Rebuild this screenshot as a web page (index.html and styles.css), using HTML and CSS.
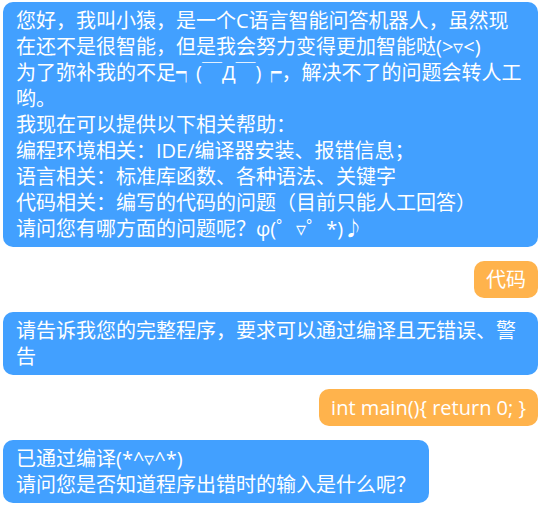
FILE: index.html
```html
<!DOCTYPE html>
<html lang="zh-CN">
<head>
<meta charset="utf-8">
<link rel="stylesheet" href="styles.css">
</head>
<body>
<div class="chat">
  <div class="msg bot">您好，我叫小猿，是一个C语言智能问答机器人，虽然现在还不是很智能，但是我会努力变得更加智能哒(&gt;▿&lt;)<br>为了弥补我的不足┑(￣Д￣)┍，解决不了的问题会转人工哟。<br>我现在可以提供以下相关帮助：<br>编程环境相关：IDE/编译器安装、报错信息；<br>语言相关：标准库函数、各种语法、关键字<br>代码相关：编写的代码的问题（目前只能人工回答）<br>请问您有哪方面的问题呢？φ(゜▿゜*)♪</div>
  <div class="msg user">代码</div>
  <div class="msg bot">请告诉我您的完整程序，要求可以通过编译且无错误、警告</div>
  <div class="msg user">int main(){ return 0; }</div>
  <div class="msg bot">已通过编译(*^▿^*)<br>请问您是否知道程序出错时的输入是什么呢？</div>
</div>
</body>
</html>
```
FILE: styles.css
```css
html, body {
  margin: 0;
  padding: 0;
  background: #ffffff;
}
.chat {
  display: flex;
  flex-direction: column;
  gap: 14px;
  padding: 2px 12px 0 3px;
  font-family: "Open Sans", "Noto Sans CJK SC", sans-serif;
  font-size: 20px;
  line-height: 26px;
  color: #ffffff;
}
.msg {
  max-width: 535px;
  box-sizing: border-box;
  border-radius: 10px;
  padding: 6px 13px 5px 13px;
  word-break: break-all;
}
.bot {
  align-self: flex-start;
  background: #42a0ff;
}
.user {
  align-self: flex-end;
  background: #ffb34c;
  padding: 6px 12px 5px 12px;
}
```
